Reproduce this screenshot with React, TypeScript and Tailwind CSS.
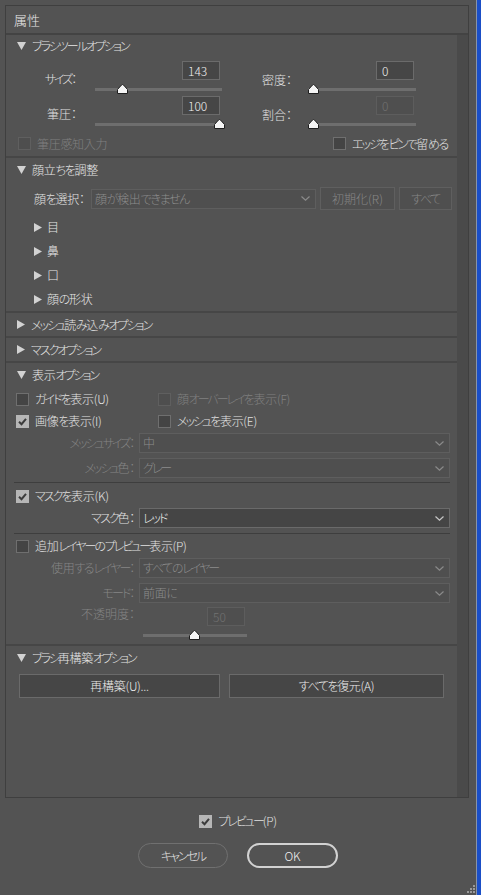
import React from 'react';

// the reference UI font has much narrower kana than Noto, so kana runs get tightened
function Jp({ children }: { children: string }) {
  const parts = children.split(/([\u3040-\u309f]+|[\u30a0-\u30ff]+)/);
  return (
    <>
      {parts.map((p, i) => {
        if (!p) return null;
        if (/^[\u30a0-\u30ff]+$/.test(p)) return <span key={i} className="tracking-[-2px]">{p}</span>;
        if (/^[\u3040-\u309f]+$/.test(p)) return <span key={i} className="tracking-[-1.3px]">{p}</span>;
        return <span key={i} className="tracking-[-0.3px]">{p}</span>;
      })}
    </>
  );
}

const DownTri = () => (
  <svg width="9" height="8" viewBox="0 0 9 8" className="shrink-0">
    <polygon points="0,0 9,0 4.5,8" fill="#d2d2d2" />
  </svg>
);

const RightTri = () => (
  <svg width="8" height="9" viewBox="0 0 8 9" className="shrink-0">
    <polygon points="0,0 8,4.5 0,9" fill="#d2d2d2" />
  </svg>
);

const Chevron = ({ color }: { color: string }) => (
  <svg width="9" height="5" viewBox="0 0 9 5" className="shrink-0">
    <polyline points="0.5,0.5 4.5,4.2 8.5,0.5" fill="none" stroke={color} strokeWidth="1.2" />
  </svg>
);

const Thumb = ({ at }: { at: number }) => (
  <svg
    width="11"
    height="10"
    viewBox="0 0 11 10"
    className="absolute top-[4px]"
    style={{ left: at - 5.5 }}
  >
    <path d="M0.5 9.5 V5.5 L4.5 1 Q5.5 0 6.5 1 L10.5 5.5 V9.5 Z" fill="#f4f4f4" stroke="#1e1e1e" strokeWidth="1" />
  </svg>
);

function Slider({ className, at }: { className: string; at: number }) {
  return (
    <div className={`relative h-[16px] ${className}`}>
      <div className="absolute left-0 right-0 top-[8px] h-[3px] bg-[#6e6e6e]" />
      <Thumb at={at} />
    </div>
  );
}

function NumBox({ value, disabled = false }: { value: string; disabled?: boolean }) {
  return (
    <div
      className={`w-[38px] h-[19px] border flex items-center pl-[5px] ${
        disabled ? 'border-[#5d5d5d] bg-[#4f4f4f] text-[#727272]' : 'border-[#6b6b6b] bg-[#464646] text-[#f2f2f2]'
      }`}
    >
      {value}
    </div>
  );
}

function Check({
  label,
  checked = false,
  disabled = false,
  className = '',
}: {
  label: string;
  checked?: boolean;
  disabled?: boolean;
  className?: string;
}) {
  let box = 'bg-[#444444] border border-[#6f6f6f]';
  if (checked) box = 'bg-[#b6b6b6]';
  if (disabled) box = 'bg-[#4e4e4e] border border-[#5f5f5f]';
  return (
    <div className={`flex items-center gap-[6px] ${className}`}>
      <span className={`w-[13px] h-[13px] flex items-center justify-center shrink-0 ${box}`}>
        {checked && (
          <svg width="11" height="11" viewBox="0 0 11 11">
            <polyline points="2,5.8 4.5,8.2 9,2.8" fill="none" stroke="#3c3c3c" strokeWidth="2" />
          </svg>
        )}
      </span>
      <span className={`whitespace-nowrap ${disabled ? 'text-[#808080]' : 'text-[#e2e2e2]'}`}>
        <Jp>{label}</Jp>
      </span>
    </div>
  );
}

function Select({
  value,
  enabled = false,
  className = '',
}: {
  value: string;
  enabled?: boolean;
  className?: string;
}) {
  return (
    <div
      className={`h-[20px] border flex items-center justify-between pl-[3px] pr-[5px] ${
        enabled ? 'bg-[#454545] border-[#6a6a6a] text-[#f0f0f0]' : 'bg-[#4f4f4f] border-[#5e5e5e] text-[#8c8c8c]'
      } ${className}`}
    >
      <span className="whitespace-nowrap">
        <Jp>{value}</Jp>
      </span>
      <Chevron color={enabled ? '#c8c8c8' : '#8a8a8a'} />
    </div>
  );
}

function Header({ label, open, h }: { label: string; open: boolean; h: string }) {
  return (
    <div className={`flex items-center gap-[6px] pl-[11px] text-[#e6e6e6] ${h}`}>
      {open ? <DownTri /> : <RightTri />}
      <span className="whitespace-nowrap">
        <Jp>{label}</Jp>
      </span>
    </div>
  );
}

const Divider = () => <div className="h-[2px] bg-[#464646]" />;

function FaceItem({ label }: { label: string }) {
  return (
    <div className="h-[24px] flex items-center gap-[5px] pl-[28px] text-[#e6e6e6]">
      <RightTri />
      <span>
        <Jp>{label}</Jp>
      </span>
    </div>
  );
}

function FieldSelect({ label, value, enabled = false, mt }: { label: string; value: string; enabled?: boolean; mt: string }) {
  return (
    <div className={`flex items-center pr-[7px] ${mt}`}>
      <span className={`w-[129px] text-right whitespace-nowrap ${enabled ? 'text-[#e2e2e2]' : 'text-[#858585]'}`}>
        <Jp>{label}</Jp>
      </span>
      <Select className="ml-[4px] flex-1" value={value} enabled={enabled} />
    </div>
  );
}

function Button({ label, className }: { label: string; className: string }) {
  return (
    <div className={`h-[24px] border border-[#6a6a6a] bg-[#464646] text-[#ececec] flex items-center justify-center ${className}`}>
      <Jp>{label}</Jp>
    </div>
  );
}

export default function App() {
  return (
    <div className="relative w-[481px] h-[895px] flex bg-[#535353] overflow-hidden text-[12px] leading-[14px] font-light font-['Noto_Sans_CJK_JP','Liberation_Sans',sans-serif] [font-feature-settings:'palt']">
      <div className="w-[476px] flex flex-col">
        <div className="ml-[5px] mt-[5px] w-[464px] h-[793px] border border-[#3f3f3f] flex flex-col">
          <div className="h-[29px] shrink-0 border-b-2 border-[#434343] flex items-center pl-[8px] text-[13px] text-[#e8e8e8]">
            属性
          </div>
          <div className="flex flex-1 min-h-0">
            <div className="flex-1 flex flex-col">
              <Header label="ブラシツールオプション" open h="h-[22px]" />

              {/* brush sliders */}
              <div className="flex mt-[4px] h-[35px]">
                <span className="w-[71px] text-right pt-[11px] text-[#e2e2e2]">
                  <Jp>サイズ：</Jp>
                </span>
                <div className="ml-[18px] w-[127px] flex flex-col">
                  <div className="flex justify-end pr-[2px]">
                    <NumBox value="143" />
                  </div>
                  <Slider className="w-[127px]" at={27.5} />
                </div>
                <span className="ml-[40px] w-[46px] pt-[12px] text-[#e2e2e2]">密度：</span>
                <div className="w-[108px] flex flex-col">
                  <div className="flex justify-end pr-[2px]">
                    <NumBox value="0" />
                  </div>
                  <Slider className="w-[108px]" at={5} />
                </div>
              </div>
              <div className="flex h-[35px]">
                <span className="w-[71px] text-right pt-[11px] text-[#e2e2e2]">筆圧：</span>
                <div className="ml-[18px] w-[127px] flex flex-col">
                  <div className="flex justify-end pr-[2px]">
                    <NumBox value="100" />
                  </div>
                  <Slider className="w-[127px]" at={124.5} />
                </div>
                <span className="ml-[40px] w-[46px] pt-[12px] text-[#e2e2e2]">割合：</span>
                <div className="w-[108px] flex flex-col">
                  <div className="flex justify-end pr-[2px]">
                    <NumBox value="0" disabled />
                  </div>
                  <Slider className="w-[108px]" at={5} />
                </div>
              </div>
              <div className="flex items-center justify-between h-[13px] mt-[6px] pl-[12px] pr-[9px]">
                <Check label="筆圧感知入力" disabled />
                <Check label="エッジをピンで留める" />
              </div>
              <div className="mt-[6px]">
                <Divider />
              </div>

              <Header label="顔立ちを調整" open h="h-[24px]" />
              <div className="flex items-center h-[23px] mt-[5px] pl-[28px]">
                <span className="w-[57px] text-[#e2e2e2] whitespace-nowrap">
                  <Jp>顔を選択：</Jp>
                </span>
                <Select className="w-[225px]" value="顔が検出できません" />
                <div className="ml-[4px] w-[75px] h-[23px] border border-[#5f5f5f] bg-[#4f4f4f] text-[#878787] flex items-center justify-center">
                  初期化(R)
                </div>
                <div className="ml-[4px] w-[53px] h-[23px] border border-[#5f5f5f] bg-[#4f4f4f] text-[#878787] flex items-center justify-center">
                  <Jp>すべて</Jp>
                </div>
              </div>
              <div className="mt-[5px]">
                <FaceItem label="目" />
                <FaceItem label="鼻" />
                <FaceItem label="口" />
                <FaceItem label="顔の形状" />
              </div>
              <Divider />
              <Header label="メッシュ読み込みオプション" open={false} h="h-[23px]" />
              <Divider />
              <Header label="マスクオプション" open={false} h="h-[23px]" />
              <Divider />
              <Header label="表示オプション" open h="h-[25px] pb-[2px]" />

              <div className="flex items-center h-[22px] pl-[10px]">
                <Check label="ガイドを表示(U)" className="w-[142px]" />
                <Check label="顔オーバーレイを表示(F)" disabled />
              </div>
              <div className="flex items-center h-[22px] pl-[10px]">
                <Check label="画像を表示(I)" checked className="w-[142px]" />
                <Check label="メッシュを表示(E)" />
              </div>
              <FieldSelect label="メッシュサイズ：" value="中" mt="mt-[1px]" />
              <FieldSelect label="メッシュ色：" value="グレー" mt="mt-[5px]" />
              <div className="mt-[4px] ml-[8px] mr-[7px] h-[1px] bg-[#3e3e3e]" />
              <div className="flex items-center h-[22px] mt-[2px] pl-[10px]">
                <Check label="マスクを表示(K)" checked />
              </div>
              <FieldSelect label="マスク色：" value="レッド" enabled mt="mt-[1px]" />
              <div className="mt-[5px] ml-[8px] mr-[7px] h-[1px] bg-[#3e3e3e]" />
              <div className="flex items-center h-[22px] mt-[1px] pl-[10px]">
                <Check label="追加レイヤーのプレビュー表示(P)" />
              </div>
              <FieldSelect label="使用するレイヤー：" value="すべてのレイヤー" mt="mt-[1px]" />
              <FieldSelect label="モード：" value="前面に" mt="mt-[5px]" />
              <div className="flex mt-[4px]">
                <span className="w-[129px] text-right text-[#858585] leading-[13px]">不透明度：</span>
                <div className="ml-[8px] w-[104px] flex flex-col">
                  <div className="flex justify-end pr-[2px]">
                    <NumBox value="50" disabled />
                  </div>
                  <Slider className="w-[104px]" at={51} />
                </div>
              </div>
              <div className="mt-[2px]">
                <Divider />
              </div>
              <Header label="ブラシ再構築オプション" open h="h-[23px]" />
              <div className="flex mt-[5px] pl-[13px] gap-[9px]">
                <Button label="再構築(U)..." className="w-[201px]" />
                <Button label="すべてを復元(A)" className="w-[215px]" />
              </div>
            </div>
            <div className="w-[11px] bg-[#4a4a4a]" />
          </div>
        </div>

        <div className="flex justify-center mt-[16px] h-[14px]">
          <Check label="プレビュー(P)" checked className="gap-[5px]" />
        </div>
        <div className="flex justify-center gap-[19px] mt-[15px]">
          <div className="w-[90px] h-[25px] rounded-full border-[1.5px] border-[#707070] text-[#e6e6e6] flex items-center justify-center">
            <Jp>キャンセル</Jp>
          </div>
          <div className="w-[91px] h-[25px] rounded-full border-2 border-[#d2d2d2] text-[#f2f2f2] flex items-center justify-center">
            OK
          </div>
        </div>
      </div>
      <div className="w-[1px] bg-[#8893a6]" />
      <div className="w-[4px] bg-[#1a4ec6]" />

      {/* resize grip */}
      <svg width="8" height="8" viewBox="0 0 8 8" className="absolute left-[467px] top-[885px]">
        <rect x="6" y="0" width="2" height="2" fill="#9a9a9a" />
        <rect x="3" y="3" width="2" height="2" fill="#9a9a9a" />
        <rect x="6" y="3" width="2" height="2" fill="#9a9a9a" />
        <rect x="0" y="6" width="2" height="2" fill="#9a9a9a" />
        <rect x="3" y="6" width="2" height="2" fill="#9a9a9a" />
        <rect x="6" y="6" width="2" height="2" fill="#9a9a9a" />
      </svg>
    </div>
  );
}
